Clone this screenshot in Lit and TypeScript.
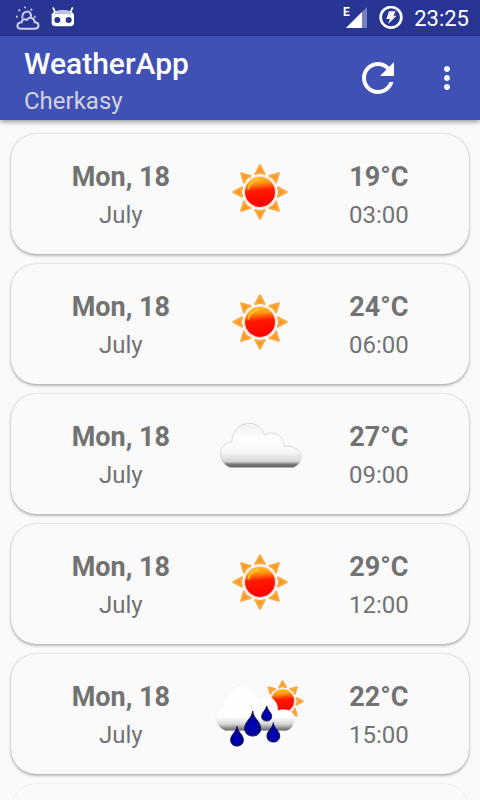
import { LitElement, html, css, svg } from "lit";
import { customElement, property } from "lit/decorators.js";

type Sky = "sun" | "cloud" | "rain";

interface Forecast {
  day: string;
  month: string;
  temp: string;
  time: string;
  sky: Sky;
}

const forecasts: Forecast[] = [
  { day: "Mon, 18", month: "July", temp: "19°C", time: "03:00", sky: "sun" },
  { day: "Mon, 18", month: "July", temp: "24°C", time: "06:00", sky: "sun" },
  { day: "Mon, 18", month: "July", temp: "27°C", time: "09:00", sky: "cloud" },
  { day: "Mon, 18", month: "July", temp: "29°C", time: "12:00", sky: "sun" },
  { day: "Mon, 18", month: "July", temp: "22°C", time: "15:00", sky: "rain" },
];

const rays = (cx: number, cy: number, near: number, far: number, half: number) =>
  svg`<g filter="url(#edge)">${[0, 45, 90, 135, 180, 225, 270, 315].map(
    (a) => svg`<path transform="rotate(${a} ${cx} ${cy})" fill="#fb9a1a" stroke="#fba840" stroke-width="6" stroke-linejoin="round"
      d="M${cx} ${cy - far}L${cx + half} ${cy - near}Q${cx} ${cy - near - 6} ${cx - half} ${cy - near}Z"/>`
  )}</g>`;

@customElement("weather-icon")
class WeatherIcon extends LitElement {
  @property() sky: Sky = "sun";

  static styles = css`
    :host {
      display: block;
    }
    .icon {
      display: block;
      width: 100px;
      height: 90px;
    }
  `;

  private sun() {
    return svg`
      ${rays(150, 126, 54, 80, 14)}
      <g filter="url(#edge)">
        <circle cx="150" cy="126" r="49" fill="#ffdccb"/>
        <circle cx="150" cy="126" r="45" fill="url(#ball)"/>
        <path d="M115 116A38 38 0 0 1 144 89" fill="none" stroke="#ffd030" stroke-width="7" stroke-linecap="round" opacity=".7"/>
      </g>`;
  }

  private cloud() {
    return svg`<path filter="url(#soft)" stroke="#cfcfcf" stroke-width="3" stroke-opacity=".7" fill="url(#puff)"
      d="M62 173C44 168 31 151 31 132C31 111 45 98 66 95C66 63 88 40 118 40C142 40 158 56 164 76C171 69 182 68 193 70C208 73 220 86 223 109C246 106 273 117 273 140C273 158 262 169 248 173Z"/>`;
  }

  private drop(x: number, y: number, w: number, h: number) {
    return svg`<path filter="url(#edge)" fill="url(#water)" stroke="#14146a" stroke-width="3"
      d="M${x} ${y}C${x + 2} ${y + h * 0.3} ${x + w} ${y + h * 0.42} ${x + w} ${y + h * 0.69}C${x + w} ${y + h * 0.88} ${x + w * 0.6} ${y + h} ${x} ${y + h}C${x - w * 0.6} ${y + h} ${x - w} ${y + h * 0.88} ${x - w} ${y + h * 0.69}C${x - w} ${y + h * 0.42} ${x - 2} ${y + h * 0.3} ${x} ${y}Z"/>`;
  }

  private rain() {
    return svg`
      ${rays(218, 94, 42, 60, 10)}
      <g filter="url(#edge)">
        <circle cx="218" cy="94" r="38" fill="#ffdccb"/>
        <circle cx="218" cy="92" r="34" fill="url(#ball)"/>
      </g>
      <path filter="url(#soft)" fill="url(#storm)" stroke="#ececec" stroke-width="2" stroke-opacity=".6"
        d="M46 182C30 176 18 162 18 142C18 126 25 115 40 105C48 74 64 48 96 47C122 47 134 58 144 84C156 76 176 76 190 88C199 96 203 106 204 122C222 114 252 121 253 143C253 164 244 178 230 182Z"/>
      ${this.drop(128, 123, 24, 75)}
      ${this.drop(170, 108, 15, 45)}
      ${this.drop(81, 169, 19, 59)}
      ${this.drop(190, 158, 19, 58)}`;
  }

  render() {
    return html`<svg class="icon" viewBox="0 0 300 270" aria-hidden="true">
      <defs>
        <linearGradient id="ball" x1=".4" y1="0" x2=".5" y2="1">
          <stop offset="0" stop-color="#ffb81f" />
          <stop offset=".2" stop-color="#ff9a12" />
          <stop offset=".45" stop-color="#ff1a00" />
          <stop offset="1" stop-color="#fc0000" />
        </linearGradient>
        <linearGradient id="puff" x1="0" y1="0" x2="0" y2="1">
          <stop offset="0" stop-color="#efefef" />
          <stop offset=".35" stop-color="#fefefe" />
          <stop offset=".65" stop-color="#f6f6f6" />
          <stop offset=".86" stop-color="#d6d6d6" />
          <stop offset=".93" stop-color="#747474" />
          <stop offset="1" stop-color="#606060" />
        </linearGradient>
        <linearGradient id="storm" x1="0" y1="0" x2="0" y2="1">
          <stop offset="0" stop-color="#fefefe" />
          <stop offset=".7" stop-color="#fefefe" />
          <stop offset=".85" stop-color="#d8d8d8" />
          <stop offset="1" stop-color="#606060" />
        </linearGradient>
        <radialGradient id="water" cx=".5" cy=".65" r=".6">
          <stop offset="0" stop-color="#0000c8" />
          <stop offset=".5" stop-color="#0000a0" />
          <stop offset="1" stop-color="#00005c" />
        </radialGradient>
        <filter id="soft" x="-10%" y="-10%" width="120%" height="120%" color-interpolation-filters="sRGB">
          <feGaussianBlur stdDeviation="2" />
        </filter>
        <filter id="edge" x="-10%" y="-10%" width="120%" height="120%" color-interpolation-filters="sRGB">
          <feGaussianBlur stdDeviation="1.5" />
        </filter>
      </defs>
      ${this.sky === "sun" ? this.sun() : this.sky === "cloud" ? this.cloud() : this.rain()}
    </svg>`;
  }
}

@customElement("forecast-card")
class ForecastCard extends LitElement {
  @property({ attribute: false }) item!: Forecast;

  static styles = css`
    :host {
      display: block;
    }
    .card {
      display: grid;
      grid-template-columns: 9fr 5fr 7fr;
      justify-items: center;
      padding: 16px 21px 14px;
      border-radius: 25px;
      background: #fafafa;
      box-shadow: 0 0 2px rgba(0, 0, 0, 0.26), 0 2px 3px rgba(0, 0, 0, 0.24);
    }
    .pair {
      display: flex;
      flex-direction: column;
      align-items: center;
      padding-top: 8px;
      line-height: 38px;
      white-space: nowrap;
    }
    .main {
      font-size: 27px;
      font-weight: 700;
    }
    .sub {
      font-size: 24px;
    }
  `;

  render() {
    const f = this.item;
    return html`<article class="card">
      <div class="pair"><span class="main">${f.day}</span><span class="sub">${f.month}</span></div>
      <weather-icon .sky=${f.sky}></weather-icon>
      <div class="pair"><span class="main">${f.temp}</span><span class="sub">${f.time}</span></div>
    </article>`;
  }
}

@customElement("app-root")
class AppRoot extends LitElement {
  static styles = css`
    :host {
      display: flex;
      flex-direction: column;
      height: 100vh;
      overflow: hidden;
      background: #fafafa;
      color: #727272;
      font-family: Roboto, sans-serif;
    }
    .status {
      display: flex;
      flex: none;
      align-items: center;
      height: 36px;
      padding: 0 11px 0 16px;
      background: #283593;
      color: #fff;
    }
    .status svg {
      display: block;
      flex: none;
    }
    .notices {
      display: flex;
      flex: 1;
      gap: 10px;
    }
    .system {
      display: flex;
      align-items: center;
      gap: 11px;
    }
    .network {
      font-size: 12px;
      font-weight: 700;
    }
    .clock {
      padding-top: 2px;
      font-size: 22px;
      line-height: 34px;
    }
    .bar {
      display: flex;
      flex: none;
      align-items: center;
      height: 84px;
      padding-left: 24px;
      background: #3f51b5;
      box-shadow: 0 2px 5px rgba(0, 0, 0, 0.4);
      z-index: 1;
    }
    .titles {
      flex: 1;
      padding-top: 6px;
    }
    h1 {
      margin: 0;
      color: #fff;
      font-size: 30px;
      font-weight: 500;
      line-height: 40px;
    }
    .city {
      margin: 0;
      color: #d1d3de;
      font-size: 24px;
      line-height: 34px;
    }
    button {
      display: flex;
      align-items: center;
      justify-content: center;
      height: 72px;
      padding: 0;
      border: 0;
      background: none;
    }
    .refresh {
      width: 72px;
    }
    .more {
      width: 66px;
    }
    ul {
      display: flex;
      flex: 1;
      flex-direction: column;
      gap: 10px;
      min-height: 0;
      margin: 0;
      padding: 14px 11px;
      overflow-y: auto;
      scrollbar-width: none;
      list-style: none;
    }
    .pending {
      flex: none;
      height: 120px;
      border-radius: 25px;
      box-shadow: 0 0 2px rgba(0, 0, 0, 0.12);
    }
  `;

  render() {
    return html`
      <div class="status">
        <div class="notices">
          <svg width="25" height="26" viewBox="0 0 75 78" fill="none" stroke="#ccd0e8" stroke-width="6" aria-label="Weather">
            <path d="M14 71H58C71 69 71 52 56 52C56 39 40 33 32 45C23 40 17 45 17 52C0 54 1 70 14 71Z" />
            <path d="M19 41C15 13 51 14 44 37" />
            <path d="M27 5V10M8 14L12 18M48 12L44 16M0 35H5M54 35H59" />
          </svg>
          <svg width="24" height="26" viewBox="0 0 72 78" aria-label="System update">
            <path d="M6 7L13 23M65 7L58 23" stroke="#fff" stroke-width="5" />
            <path d="M9 20Q36 12 62 20L69 28V55Q68 64 57 64H14Q3 64 2 55V28Z" fill="#fff" />
            <path d="M11 21Q36 13 60 21V28H11Z" fill="#bfc3df" />
            <circle cx="19" cy="45" r="9" fill="#283593" />
            <circle cx="53" cy="45" r="9" fill="#283593" />
          </svg>
        </div>
        <div class="system">
          <svg width="25" height="24" viewBox="0 0 25 24" aria-label="Mobile signal">
            <text class="network" x="0" y="10" fill="#fff">E</text>
            <path d="M24 1V22H3Z" fill="#7680bc" />
            <path d="M19 6V22H3Z" fill="#fff" />
          </svg>
          <svg width="24" height="24" viewBox="0 0 72 72" aria-label="Battery charging">
            <circle cx="36" cy="34" r="31" fill="none" stroke="#fff" stroke-width="8" />
            <path d="M30 16H50L43 29H53L27 54L33 39H22Z" fill="#fff" />
          </svg>
          <span class="clock">23:25</span>
        </div>
      </div>
      <header class="bar">
        <div class="titles">
          <h1>WeatherApp</h1>
          <p class="city">Cherkasy</p>
        </div>
        <button class="refresh" aria-label="Refresh">
          <svg width="48" height="48" viewBox="0 0 24 24" fill="#fff">
            <path d="M17.65 6.35C16.2 4.9 14.21 4 12 4c-4.42 0-7.99 3.58-7.99 8s3.57 8 7.99 8c3.73 0 6.84-2.55 7.73-6h-2.08c-.82 2.33-3.04 4-5.65 4-3.31 0-6-2.69-6-6s2.69-6 6-6c1.66 0 3.14.69 4.22 1.78L13 11h7V4l-2.35 2.35z" />
          </svg>
        </button>
        <button class="more" aria-label="More options">
          <svg width="36" height="36" viewBox="0 0 24 24" fill="#fff">
            <path d="M12 8c1.1 0 2-.9 2-2s-.9-2-2-2-2 .9-2 2 .9 2 2 2zm0 2c-1.1 0-2 .9-2 2s.9 2 2 2 2-.9 2-2-.9-2-2-2zm0 6c-1.1 0-2 .9-2 2s.9 2 2 2 2-.9 2-2-.9-2-2-2z" />
          </svg>
        </button>
      </header>
      <ul>
        ${forecasts.map((f) => html`<li><forecast-card .item=${f}></forecast-card></li>`)}
        <li class="pending"></li>
      </ul>
    `;
  }
}
